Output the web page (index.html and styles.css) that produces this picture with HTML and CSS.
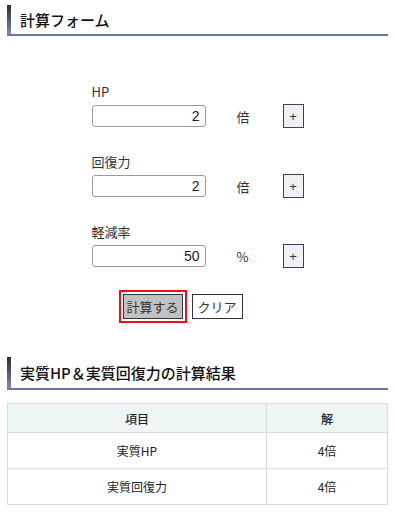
FILE: index.html
```html
<!DOCTYPE html>
<html lang="ja">
<head>
<meta charset="utf-8">
<link rel="stylesheet" href="styles.css">
</head>
<body>
<h2 class="heading">計算フォーム</h2>
<div class="form">
  <div class="field">
    <div class="label">HP</div>
    <div class="row">
      <input class="num" type="text" value="2">
      <span class="unit">倍</span>
      <button class="plus">+</button>
    </div>
  </div>
  <div class="field">
    <div class="label">回復力</div>
    <div class="row">
      <input class="num" type="text" value="2">
      <span class="unit">倍</span>
      <button class="plus">+</button>
    </div>
  </div>
  <div class="field">
    <div class="label">軽減率</div>
    <div class="row">
      <input class="num" type="text" value="50">
      <span class="unit">%</span>
      <button class="plus">+</button>
    </div>
  </div>
  <div class="actions">
    <button class="calc">計算する</button>
    <button class="clear">クリア</button>
  </div>
</div>
<h2 class="heading heading2">実質HP＆実質回復力の計算結果</h2>
<table class="result">
  <thead>
    <tr><th class="c1">項目</th><th>解</th></tr>
  </thead>
  <tbody>
    <tr><td>実質HP</td><td>4倍</td></tr>
    <tr><td>実質回復力</td><td>4倍</td></tr>
  </tbody>
</table>
</body>
</html>
```
FILE: styles.css
```css
html, body {
  margin: 0;
  padding: 0;
  background: #fff;
}
body {
  padding: 5px 7px 0 7px;
  font-family: "Noto Sans CJK JP", "Noto Sans", sans-serif;
  color: #222;
}
.heading {
  margin: 0;
  position: relative;
  font-size: 15px;
  font-weight: 500;
  line-height: 20px;
  padding: 5px 0 4px 13px;
  border-bottom: 2px solid #6b77a6;
  color: #111;
}
.heading::before {
  content: "";
  position: absolute;
  left: 0;
  top: 0;
  bottom: 0;
  width: 4px;
  background: linear-gradient(#2a2a38, #7d88b0);
}
.form {
  width: 212px;
  margin: 48px auto 0;
}
.field {
  margin-bottom: 26px;
}
.label {
  font-size: 13px;
  line-height: 16px;
  color: #333;
  margin-bottom: 4px;
}
.row {
  display: flex;
  align-items: center;
  height: 24px;
}
.num {
  box-sizing: border-box;
  width: 114px;
  height: 22px;
  border: 1px solid #9a9a9a;
  border-radius: 3px;
  padding: 0 5px;
  text-align: right;
  font-family: "Liberation Sans", "Noto Sans", sans-serif;
  font-size: 14px;
  color: #222;
  background: #fff;
}
.unit {
  width: 77px;
  padding-left: 31px;
  box-sizing: border-box;
  font-size: 13px;
  color: #333;
}
.plus {
  box-sizing: border-box;
  width: 21px;
  height: 24px;
  padding: 0;
  border: 1px solid #3a4058;
  background: #eef0f4;
  font-family: "Liberation Sans", sans-serif;
  font-size: 13px;
  color: #333;
}
.actions {
  display: flex;
  gap: 9px;
  margin-top: 1px;
  padding-left: 31px;
}
.actions button {
  box-sizing: border-box;
  height: 25px;
  border: 1px solid #2e3448;
  font-family: "Noto Sans CJK JP", "Noto Sans", sans-serif;
  font-size: 13px;
  line-height: 1;
  padding: 0;
  white-space: nowrap;
  color: #333;
}
.calc {
  width: 60px;
  background: #c2c2c2;
  outline: 2px solid #f01010;
  outline-offset: 2px;
}
.clear {
  width: 51px;
  background: #fff;
}
.heading2 {
  margin-top: 38px;
  padding-top: 6px;
  padding-bottom: 5px;
}
.result {
  width: 100%;
  margin-top: 13px;
  border-collapse: collapse;
  font-size: 12px;
  color: #222;
}
.result th, .result td {
  border: 1px solid #dcdcdc;
  text-align: center;
  padding: 0;
}
.result th {
  background: #eef5f5;
  height: 28px;
  font-weight: 500;
}
.result td {
  height: 35px;
}
.result .c1 {
  width: 258px;
}
```
